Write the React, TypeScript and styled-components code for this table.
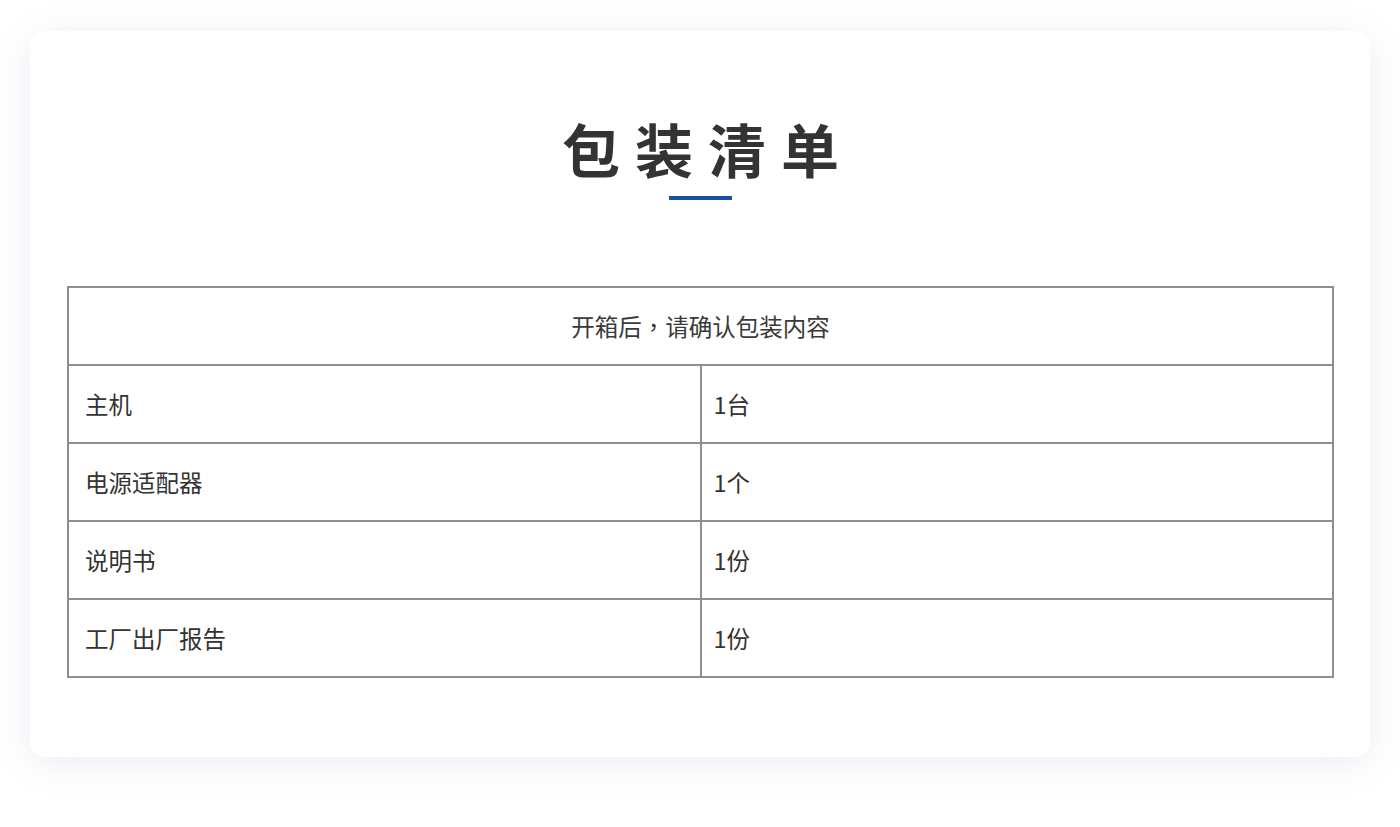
import React from 'react';
import styled, { createGlobalStyle } from 'styled-components';

const GlobalStyle = createGlobalStyle`
  html, body {
    margin: 0;
    padding: 0;
    background: #ffffff;
  }
  body {
    font-family: "Noto Sans CJK SC", sans-serif;
    color: #333333;
  }
`;

const Page = styled.div`
  width: 1400px;
  height: 827px;
  padding: 31px 30px 0;
  box-sizing: border-box;
`;

const Card = styled.section`
  height: 726px;
  background: #ffffff;
  border-radius: 16px;
  box-shadow: 0 6px 36px rgba(120, 140, 180, 0.16);
  padding: 84px 36px 0 37px;
  box-sizing: border-box;
  display: flex;
  flex-direction: column;
  align-items: center;
`;

const Title = styled.h2`
  margin: 0 -15px 0 0;
  font-family: "Noto Sans CJK SC", sans-serif;
  font-size: 58px;
  font-weight: 700;
  line-height: 66px;
  letter-spacing: 15px;
  color: #333333;
`;

const Underline = styled.div`
  width: 63px;
  height: 4px;
  margin-top: 15px;
  background: #1c4fa2;
`;

const Table = styled.table`
  margin-top: 86px;
  width: 100%;
  border-collapse: collapse;
  table-layout: fixed;
  font-family: "Noto Sans CJK SC", sans-serif;
  font-size: 23.5px;
  color: #333333;
`;

const HeadCell = styled.th`
  height: 76px;
  border: 2px solid #8e8e8e;
  font-family: "Noto Sans CJK TC", "Noto Sans CJK SC", sans-serif;
  font-weight: 400;
  text-align: center;
  padding: 0;
  color: #3a3a3a;
`;

const Cell = styled.td<{ $inset: number }>`
  height: 76px;
  border: 2px solid #8e8e8e;
  padding: 0 0 0 ${(p) => p.$inset}px;
  text-align: left;
`;

const items = [
  { name: '主机', qty: '1台' },
  { name: '电源适配器', qty: '1个' },
  { name: '说明书', qty: '1份' },
  { name: '工厂出厂报告', qty: '1份' },
];

const App: React.FC = () => {
  return (
    <Page>
      <GlobalStyle />
      <Card>
        <Title>包装清单</Title>
        <Underline />
        <Table>
          <thead>
            <tr>
              <HeadCell colSpan={2}>开箱后，请确认包装内容</HeadCell>
            </tr>
          </thead>
          <tbody>
            {items.map((item, index) => (
              <tr key={index}>
                <Cell $inset={16}>{item.name}</Cell>
                <Cell $inset={12}>{item.qty}</Cell>
              </tr>
            ))}
          </tbody>
        </Table>
      </Card>
    </Page>
  );
};

export default App;
